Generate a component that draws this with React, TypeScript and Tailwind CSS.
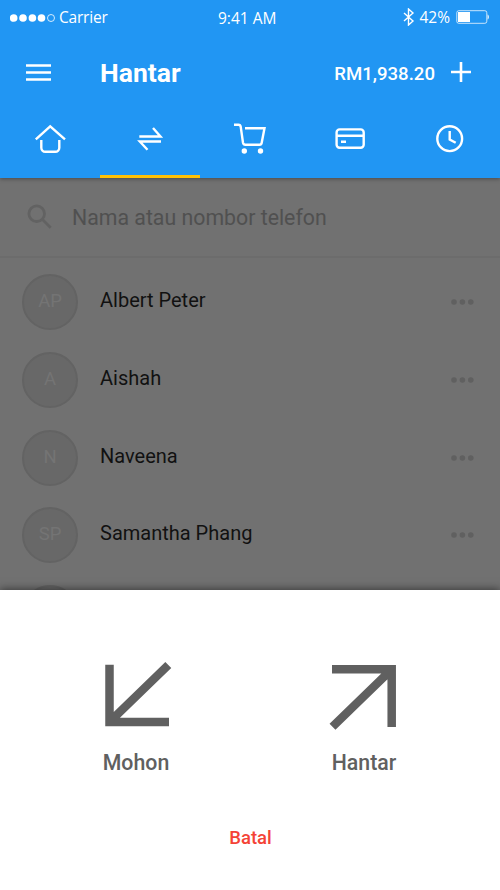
import type { ReactNode } from 'react';

const contacts = [
  { name: 'Albert Peter', initials: 'AP' },
  { name: 'Aishah', initials: 'A' },
  { name: 'Naveena', initials: 'N' },
  { name: 'Samantha Phang', initials: 'SP' },
  { name: '', initials: '' },
];

function StatusBar() {
  return (
    <div className="flex h-[34px] items-center pl-2.5 pr-2.5 font-['Open_Sans',sans-serif] text-[15px] leading-5">
      <div className="flex w-[208px] items-center">
        <svg width="46" height="10" viewBox="0 0 46 10" fill="#fff" className="mt-0.5">
          <circle cx="3.7" cy="5" r="3.8" />
          <circle cx="13" cy="5" r="3.8" />
          <circle cx="22.4" cy="5" r="3.8" />
          <circle cx="31.5" cy="5" r="3.8" />
          <circle cx="41" cy="5" r="3.5" fill="none" stroke="#fff" strokeWidth="0.8" />
        </svg>
        <span className="ml-[3px] text-[15.5px] tracking-[-0.2px]">Carrier</span>
      </div>
      <span className="mt-0.5 text-[15.5px]">9:41 AM</span>
      <div className="ml-auto flex items-center">
        <svg width="12" height="18" viewBox="0 0 12 18" fill="none" stroke="#fff" strokeWidth="1.4">
          <path d="M1 5l9 8-4.5 4V1L10 5l-9 8" />
        </svg>
        <span className="ml-1 text-[15.5px]">42%</span>
        <svg width="34" height="14" viewBox="0 0 34 14" className="ml-1.5">
          <rect x="0.8" y="0.7" width="30" height="12.6" rx="2" fill="none" stroke="#fff" strokeOpacity="0.75" />
          <rect x="2" y="2" width="12" height="10" fill="#fff" />
          <path d="M31.5 4.5c2 .5 2 4.500 0 5z" fill="#fff" fillOpacity="0.8" />
        </svg>
      </div>
    </div>
  );
}

function Tab({ active, children }: { active?: boolean; children: ReactNode }) {
  return (
    <button className={`flex flex-1 justify-center border-b-[3px] pt-[7px] ${active ? 'border-[#ffc107]' : 'border-transparent'}`}>
      <svg width="40" height="40" viewBox="0 0 40 40" fill="none" stroke="#fff" strokeWidth="2.4">
        {children}
      </svg>
    </button>
  );
}

function Header() {
  return (
    <header className="relative z-10 flex h-[178px] flex-col bg-[#2196f3] text-white shadow-[0_1px_4px_rgba(0,0,0,0.35)]">
      <StatusBar />
      <div className="flex h-[78px] items-center pl-[26px] pr-[29px]">
        <svg width="25" height="18" viewBox="0 0 25 18" stroke="#fff" strokeWidth="2.6">
          <path d="M0 1.500h25M0 8.500h25M0 15.500h25" />
        </svg>
        <h1 className="ml-[49px] text-[26.5px] font-bold leading-8">Hantar</h1>
        <span className="ml-auto mt-px text-[18.6px] font-medium leading-6">RM1,938.20</span>
        <svg width="20" height="20" viewBox="0 0 20 20" stroke="#fff" strokeWidth="2.6" className="-mt-0.5 ml-4">
          <path d="M0 10h20M10 0v20" />
        </svg>
      </div>
      <nav className="flex flex-1">
        <Tab>
          <path d="M5.800 20.300L20.200 7.300l14.800 13" />
          <path d="M11.300 21v7.700a4 4 0 0 0 4 4h10a4 4 0 0 0 4-4V21" />
        </Tab>
        <Tab active>
          <path d="M9.300 17.500H30.500L23 9M31 22.500H9.800L17.500 30.800" />
        </Tab>
        <Tab>
          <path d="M4 5.700h4.500c1.300 0 2 .8 2.200 2l2.300 16c.3 1.300 1 2 2.300 2H29.500c1.300 0 2-.7 2.200-2L34.500 9.200H15" />
          <circle cx="14.300" cy="32" r="2.700" fill="#fff" stroke="none" />
          <circle cx="30.500" cy="32" r="2.700" fill="#fff" stroke="none" />
        </Tab>
        <Tab>
          <rect x="6.600" y="10.400" width="27.100" height="18.400" rx="3" />
          <path d="M6.500 16.700h27.300M11 22.800h5" />
        </Tab>
        <Tab>
          <circle cx="19.700" cy="19.700" r="12.400" />
          <path d="M19.700 12v8.500l6 3.300" />
        </Tab>
      </nav>
    </header>
  );
}

function ContactRow({ name, initials }: { name: string; initials: string }) {
  return (
    <li className="flex h-[77.800px] shrink-0 items-start pl-[22px] pr-[26px] pt-4">
      <div className="flex size-14 shrink-0 items-center justify-center rounded-full border-2 border-[#636363] bg-[#686868] pb-0.5 text-[18.5px] leading-6 text-[#747474]">
        {initials}
      </div>
      <span className="ml-[22px] mt-[12px] text-[20px] leading-7 text-[#111]">{name}</span>
      <svg width="23" height="6" viewBox="0 0 23 6" fill="#606060" className="ml-auto mt-[25px]">
        <circle cx="3" cy="3" r="2.800" />
        <circle cx="11.400" cy="3" r="2.800" />
        <circle cx="19.800" cy="3" r="2.800" />
      </svg>
    </li>
  );
}

export default function App() {
  return (
    <main className="flex h-[890px] w-[500px] flex-col overflow-hidden bg-[#717171] font-['Roboto',sans-serif]">
      <Header />

      <section className="flex h-[412px] flex-col overflow-hidden">
        <div className="flex h-20 shrink-0 items-center border-b-2 border-[#6c6c6c] pl-[27px]">
          <svg width="26" height="26" viewBox="0 0 26 26" fill="none" stroke="#626262" strokeWidth="2.800">
            <circle cx="9.700" cy="9.700" r="7.800" />
            <path d="M15 15l8.700 8.700" />
          </svg>
          <span className="ml-[19px] mt-0.5 text-[21.3px] leading-7 text-[#505050]">Nama atau nombor telefon</span>
        </div>
        <ul className="flex flex-col">
          {contacts.map((c, i) => (
            <ContactRow key={i} name={c.name} initials={c.initials} />
          ))}
        </ul>
      </section>

      <section className="relative flex flex-1 flex-col items-center bg-white text-[#606060] shadow-[0_-1px_8px_rgba(0,0,0,0.5)]">
        <div className="flex w-full pt-[70px]">
          <button className="ml-[101px] flex w-[70px] flex-col items-center">
            <svg width="70" height="72" viewBox="0 0 70 72" fill="none" stroke="#606060" strokeWidth="8.500" className="ml-0.5">
              <path d="M7.500 4.700v57.400H67M8 61.500L66.300 5" />
            </svg>
            <span className="mt-[17px] text-[21.3px] font-medium leading-7">Mohon</span>
          </button>
          <button className="ml-[158px] flex w-[70px] flex-col items-center">
            <svg width="70" height="72" viewBox="0 0 70 72" fill="none" stroke="#606060" strokeWidth="8.500">
              <path d="M3 9.300h59.700V67M62.500 9.500L3.500 66.700" />
            </svg>
            <span className="mt-[17px] text-[21.3px] font-medium leading-7">Hantar</span>
          </button>
        </div>
        <button className="mt-[49px] pl-px text-[18.500px] font-medium leading-6 text-[#f44336]">Batal</button>
      </section>
    </main>
  );
}
